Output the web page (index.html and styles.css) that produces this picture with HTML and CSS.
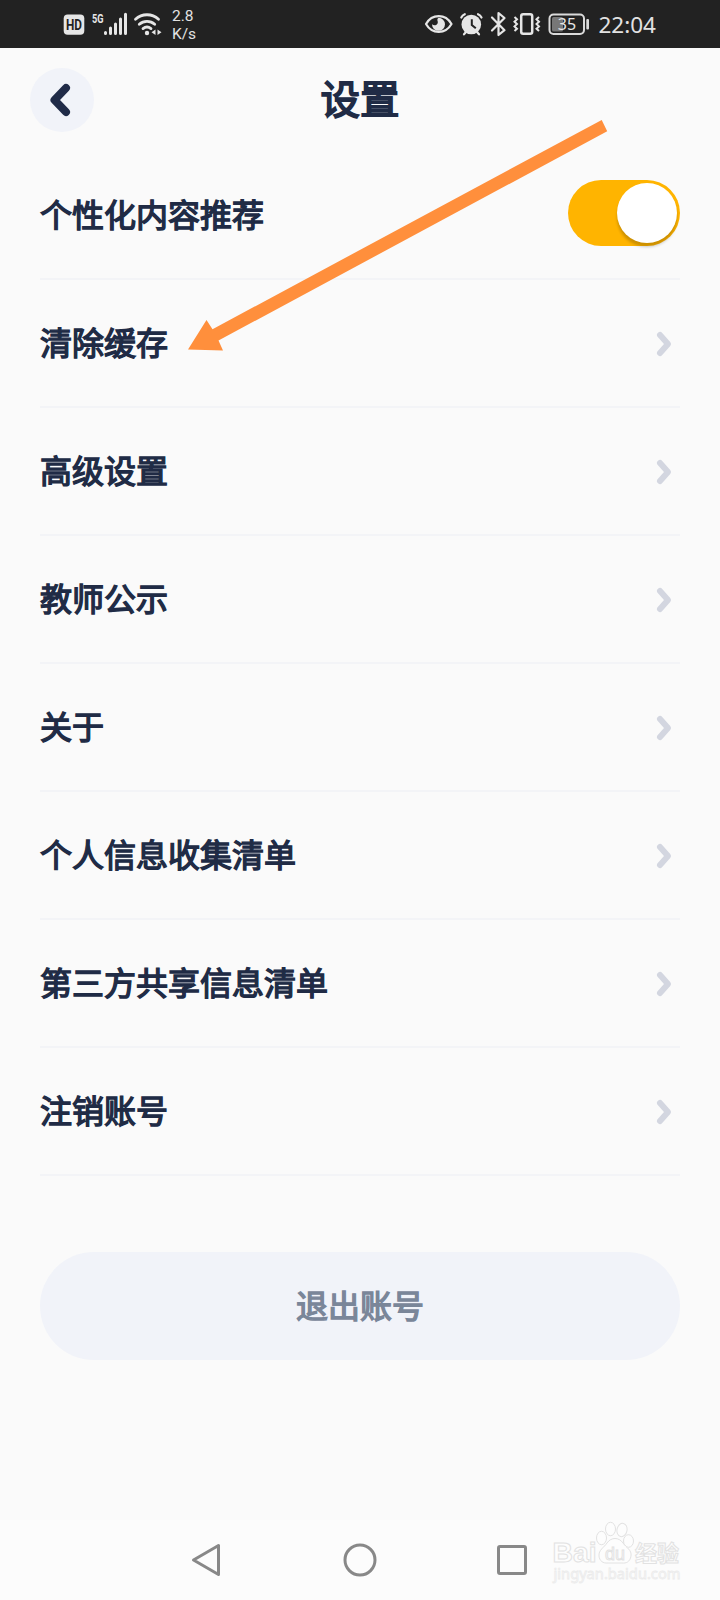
FILE: index.html
```html
<!DOCTYPE html>
<html lang="zh-CN">
<head>
    <meta charset="UTF-8">
    <meta name="viewport" content="width=device-width, initial-scale=1.0">
    <title>设置</title>
    <link rel="stylesheet" href="styles.css">
</head>
<body>
    <div class="status-bar">
        <div class="status-left">
            <svg width="28" height="48" viewBox="60 0 28 48">
                <rect x="63.7" y="14.5" width="20.6" height="20.3" rx="4" fill="#e6e6e6"/>
                <text x="66" y="30" class="hd-text" textLength="16" lengthAdjust="spacingAndGlyphs">HD</text>
            </svg>
            <svg width="42" height="48" viewBox="88 0 42 48">
                <text x="92" y="22.8" class="net-text" textLength="11.5" lengthAdjust="spacingAndGlyphs">5G</text>
                <path d="M105.5 32.5v1M110.5 28v5.500M115.500 24v9.500M120.500 19v14.500M125.500 14.300v19.200" stroke="#e6e6e6" stroke-width="3" stroke-linecap="round"/>
            </svg>
            <svg width="40" height="48" viewBox="130 0 40 48" fill="none" stroke="#e6e6e6" stroke-width="2.8" stroke-linecap="round">
                <path d="M135.5 19.3a16.8 16.8 0 0 1 23 0M139.3 24.3a11.5 11.5 0 0 1 15.4 0M143 28.6a6.4 6.4 0 0 1 8 0"/>
                <circle cx="147" cy="33" r="2.2" fill="#e6e6e6" stroke="none"/>
                <path d="M155.5 29.5v5.5l-4-2.7zM157.5 29.5v5.5l4-2.7z" fill="#e6e6e6" stroke="none"/>
            </svg>
            <div class="speed"><span>2.8</span><span>K/s</span></div>
        </div>
        <div class="status-right">
            <svg width="34" height="48" viewBox="422 0 34 48">
                <path d="M426 24c6-10.5 19.5-10.5 25.5 0c-6 10.5-19.5 10.5-25.5 0z" fill="none" stroke="#e6e6e6" stroke-width="2.2" stroke-linejoin="round"/>
                <path d="M438.5 17.800a6.5 6.5 0 1 1-6.5 6.5c3 2.5 7 0 5.5-3.5c-.3-1-.2-2 1-3z" fill="#e6e6e6"/>
            </svg>
            <svg width="32" height="48" viewBox="456 0 32 48">
                <circle cx="471.3" cy="24.5" r="9.8" fill="#e6e6e6"/>
                <path d="M461.3 17.5a7 7 0 0 1 3.5-3.3M481.5 17.5a7 7 0 0 0-3.5-3.3M464 34.3l2-2.3M479 34.3l-2-2.3" fill="none" stroke="#e6e6e6" stroke-width="2.2" stroke-linecap="round"/>
                <path d="M471.8 19.3v5.700l4 3.300" fill="none" stroke="#222" stroke-width="2"/>
            </svg>
            <svg width="22" height="48" viewBox="488 0 22 48">
                <path d="M492 17.5l12.5 12.7-6 4.800v-22l6 5-12.500 12.500" fill="none" stroke="#e6e6e6" stroke-width="2.2" stroke-linejoin="round" stroke-linecap="round"/>
            </svg>
            <svg width="34" height="48" viewBox="510 0 34 48" fill="none" stroke="#e6e6e6">
                <rect x="521.2" y="14.2" width="11" height="19.6" rx="2" stroke-width="2.5"/>
                <path d="M514.5 17l2.5 2.3-2.5 2.4 2.5 2.3-2.5 2.4 2.5 2.3-2.5 2.3M539 17l-2.5 2.3 2.5 2.4-2.5 2.3 2.5 2.4-2.5 2.3 2.5 2.3" stroke-width="2"/>
            </svg>
            <svg width="50" height="48" viewBox="544 0 50 48">
                <rect x="549.5" y="14.5" width="34.5" height="19.5" rx="4" fill="none" stroke="#dadada" stroke-width="2"/>
                <rect x="552" y="17" width="11" height="14.5" rx="1.5" fill="#777"/>
                <rect x="586.3" y="19" width="2.7" height="10.5" rx="1" fill="#dadada"/>
                <text x="567" y="30" class="battery-text">35</text>
            </svg>
            <span class="clock">22:04</span>
        </div>
    </div>

    <div class="header">
        <button class="back">
            <svg width="64" height="64" viewBox="0 0 64 64"><path d="M36 20L24.5 32 36 44" fill="none" stroke="#202b48" stroke-width="8" stroke-linecap="round" stroke-linejoin="round"/></svg>
        </button>
        <h1>设置</h1>
    </div>

    <ul class="list">
        <li class="item">
            <span>个性化内容推荐</span>
            <div class="switch"><div class="knob"></div></div>
        </li>
        <li class="item"><span>清除缓存</span><svg class="more" viewBox="0 0 32 32"><path d="M12 7l8 9-8 9"/></svg></li>
        <li class="item"><span>高级设置</span><svg class="more" viewBox="0 0 32 32"><path d="M12 7l8 9-8 9"/></svg></li>
        <li class="item"><span>教师公示</span><svg class="more" viewBox="0 0 32 32"><path d="M12 7l8 9-8 9"/></svg></li>
        <li class="item"><span>关于</span><svg class="more" viewBox="0 0 32 32"><path d="M12 7l8 9-8 9"/></svg></li>
        <li class="item"><span>个人信息收集清单</span><svg class="more" viewBox="0 0 32 32"><path d="M12 7l8 9-8 9"/></svg></li>
        <li class="item"><span>第三方共享信息清单</span><svg class="more" viewBox="0 0 32 32"><path d="M12 7l8 9-8 9"/></svg></li>
        <li class="item"><span>注销账号</span><svg class="more" viewBox="0 0 32 32"><path d="M12 7l8 9-8 9"/></svg></li>
    </ul>

    <button class="logout"><span>退出账号</span></button>

    <div class="nav-bar">
        <svg width="32" height="36" viewBox="0 0 32 36"><path d="M5.5 18L30.5 3.5v29z"/></svg>
        <svg width="36" height="36" viewBox="0 0 36 36"><circle cx="18" cy="18" r="15"/></svg>
        <svg width="36" height="36" viewBox="0 0 36 36"><rect x="4.5" y="4.5" width="27" height="27" rx="1.5"/></svg>
    </div>

    <!-- arrow pointing at the clear cache row -->
    <svg class="pointer" width="430" height="240" viewBox="0 0 430 240">
        <path d="M8 231.5L26.500 202l6 9.200L421.700 2l5.500 11.300L38.500 222.500l4.500 10z"/>
    </svg>

    <!-- watermark -->
    <svg class="watermark" width="150" height="70" viewBox="0 0 150 70">
        <text x="12.500" y="41.500" class="wm-brand" textLength="44" lengthAdjust="spacingAndGlyphs">Bai</text>
        <g class="wm-paw">
            <ellipse cx="61.500" cy="18" rx="5" ry="6.700"/>
            <ellipse cx="70.500" cy="9" rx="5" ry="6.700"/>
            <ellipse cx="82" cy="10" rx="5" ry="6.700" transform="rotate(12 82 10)"/>
            <ellipse cx="88.500" cy="21" rx="5" ry="6.300"/>
            <path d="M67 23c4-6 12-6 16 0c3 4.500 9 7 8 13c-1 6-5 7.500-9 7h-14c-5 .5-8.500-2-9-7c-.5-6 5-8.500 8-13z"/>
        </g>
        <text x="65" y="39.500" class="wm-du" textLength="20" lengthAdjust="spacingAndGlyphs">du</text>
        <text x="95" y="41" class="wm-cn">经验</text>
        <text x="13.500" y="58.500" class="wm-url" textLength="127" lengthAdjust="spacingAndGlyphs">jingyan.baidu.com</text>
    </svg>
</body>
</html>
```
FILE: styles.css
```css
* {
    margin: 0;
    padding: 0;
    box-sizing: border-box;
}

body {
    position: relative;
    display: flex;
    flex-direction: column;
    width: 720px;
    height: 1600px;
    overflow: hidden;
    background-color: #fafafa;
    color: #202b45;
    font-family: "Noto Sans CJK SC", sans-serif;
}

svg {
    display: block;
    flex-shrink: 0;
}

button {
    border: none;
    background-color: #f1f3f9;
    font-family: inherit;
}

/* status bar */
.status-bar {
    display: flex;
    justify-content: space-between;
    height: 48px;
    padding: 0 64px 0 60px;
    background-color: #222;
    color: #e2e2e2;
}

.status-left, .status-right {
    display: flex;
    align-items: center;
}

.hd-text {
    font: bold 14px Roboto, sans-serif;
    fill: #222;
}

.net-text {
    font: bold 12.5px Roboto, sans-serif;
    fill: #e6e6e6;
}

.battery-text {
    font: 16px "Noto Sans", sans-serif;
    text-anchor: middle;
    fill: #e6e6e6;
}

.speed {
    display: flex;
    flex-direction: column;
    padding: 1px 0 0 2px;
    font: 15.5px/18px Roboto, sans-serif;
}

.clock {
    padding: 2px 0 0 4px;
    font: 22.5px/46px "Noto Sans", sans-serif;
}

/* header */
.header {
    display: grid;
    grid-template-columns: 64px 1fr 64px;
    align-items: center;
    height: 104px;
    padding: 0 30px;
}

.back {
    width: 64px;
    height: 64px;
    border-radius: 50%;
}

.header h1 {
    padding-bottom: 6px;
    font-size: 39.5px;
    line-height: 58px;
    font-weight: normal;
    text-align: center;
    -webkit-text-stroke: 1.8px;
}

/* settings list */
.list {
    padding: 0 40px;
    list-style: none;
}

.item {
    display: flex;
    justify-content: space-between;
    align-items: center;
    height: 128px;
    border-bottom: 2px solid #f3f4f7;
    font-size: 32px;
    -webkit-text-stroke: 1.4px;
}

.item span, .logout span {
    padding-bottom: 4px;
}

.more {
    width: 32px;
    height: 32px;
    margin-top: 1px;
    fill: none;
    stroke: #d3d6e0;
    stroke-width: 6;
    stroke-linecap: round;
    stroke-linejoin: round;
}

.switch {
    display: flex;
    justify-content: flex-end;
    width: 112px;
    height: 66px;
    margin-bottom: 4px;
    padding: 3px;
    border-radius: 33px;
    background-color: #ffb400;
}

.knob {
    width: 60px;
    height: 60px;
    border-radius: 50%;
    background-color: white;
    box-shadow: 0 4px 3px rgba(0,0,0,0.2);
}

.logout {
    display: flex;
    justify-content: center;
    align-items: center;
    height: 108px;
    margin: 76px 40px 0;
    border-radius: 54px;
    color: #7a8699;
    font-size: 32px;
    -webkit-text-stroke: 1.4px;
}

/* system navigation */
.nav-bar {
    display: flex;
    justify-content: space-between;
    align-items: center;
    height: 80px;
    margin-top: auto;
    padding: 0 190px 0 188px;
    background-color: #fcfcfc;
    fill: none;
    stroke: #888;
    stroke-width: 3;
    stroke-linejoin: round;
}

.nav-bar svg:nth-child(2) {
    margin-left: 5px;
}

.pointer {
    position: absolute;
    left: 180px;
    top: 118px;
    fill: #ff8f3c;
}

.watermark {
    position: absolute;
    left: 540px;
    top: 1520px;
    fill: #fdfdfd;
    stroke: #e2e2e2;
    stroke-width: 1;
}

.wm-brand {
    font: bold 28px "Liberation Sans", sans-serif;
}

.wm-du {
    font: 19px "Liberation Sans", sans-serif;
}

.wm-cn {
    font: bold 22px "Noto Sans CJK SC", sans-serif;
}

.wm-url {
    font: 14.5px "Noto Sans", sans-serif;
    stroke: #ebebeb;
    stroke-width: 0.8;
}
```
